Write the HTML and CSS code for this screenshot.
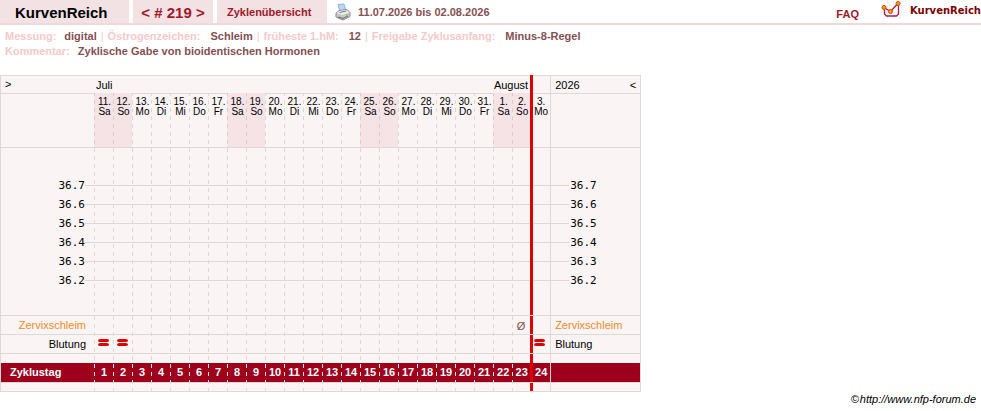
FILE: index.html
```html
<!DOCTYPE html>
<html lang="de">
<head>
<meta charset="utf-8">
<title>KurvenReich</title>
<link rel="stylesheet" href="styles.css">
</head>
<body>
<header class="topbar">
  <h1 class="tab brand">KurvenReich</h1>
  <nav class="tab pager"><a href="#prev">&lt;</a> <span># 219</span> <a href="#next">&gt;</a></nav>
  <a class="tab overview" href="#overview">Zyklenübersicht</a>
  <a class="print" href="#print" aria-label="Drucken">
    <svg width="16" height="18" viewBox="0 0 16 18" aria-hidden="true">
      <path d="M3 1.500 9 1l2 7-6 1z" fill="#b5d8f8" stroke="#8fb3dc"/>
      <path d="M1 10 4 7.500l8-1 3 3v4L8 17l-7-3z" fill="#c4c7c5" stroke="#8b908e"/>
      <path d="M1.500 10 4.500 8l7-1 3 2.500L7.500 12z" fill="#eceeec"/>
      <path d="M4.500 9.500l7-1.500" stroke="#777"/>
      <path d="M3 14l5 1.500 5-2.500" stroke="#666" fill="none"/>
      <path d="M11 12h2" stroke="#7dba62"/>
    </svg>
  </a>
  <span class="range">11.07.2026 bis 02.08.2026</span>
  <a class="faq" href="#faq">FAQ</a>
  <a class="logo" href="#home">
    <svg width="26" height="20" viewBox="0 0 26 20" aria-hidden="true">
      <path d="M0 12.500h26M0 5.500h26M6.500 1v18M12.500 1v18M19.500 1v18" stroke="#eee" stroke-dasharray="3 1"/>
      <path d="M3.500 8v6l2 2h10l2-2V5" fill="none" stroke="#b5184f" stroke-width="1.300"/>
      <path d="M3 7.500l6.500 4L17 3.500" fill="none" stroke="#b5184f" stroke-width="1.300"/>
      <g fill="#ff9a00" stroke="#c8500a"><circle cx="3" cy="7.500" r="2"/><circle cx="9.500" cy="11.500" r="2"/><circle cx="17" cy="3.500" r="2"/></g>
    </svg>
    <span>KurvenReich</span>
  </a>
</header>

<section class="info">
  <p><span>Messung:</span><b>digital</b><i>|</i><span>Östrogenzeichen:</span><b class="wide">Schleim</b><i>|</i><span>früheste 1.hM:</span><b class="wide">12</b><i>|</i><span>Freigabe Zyklusanfang:</span><b class="wide">Minus-8-Regel</b></p>
  <p><span>Kommentar:</span><b>Zyklische Gabe von bioidentischen Hormonen</b></p>
</section>

<table class="chart">
  <colgroup><col class="c-label"><col class="c-day" span="22"><col class="c-last"><col class="c-next"><col class="c-side"></colgroup>
  <tbody>
  <tr class="months">
    <td class="side nav"><a href="#earlier">&gt;</a></td>
    <th class="side july" colspan="21">Juli</th>
    <th class="side august" colspan="2">August</th>
    <td class="side next"></td>
    <td class="side right"><div class="year"><span>2026</span><a href="#later">&lt;</a></div></td>
  </tr>
  <tr class="dates">
    <td class="side"></td>
    <th class="we">11.<br>Sa</th><th class="we">12.<br>So</th><th>13.<br>Mo</th><th>14.<br>Di</th><th>15.<br>Mi</th><th>16.<br>Do</th><th>17.<br>Fr</th>
    <th class="we">18.<br>Sa</th><th class="we">19.<br>So</th><th>20.<br>Mo</th><th>21.<br>Di</th><th>22.<br>Mi</th><th>23.<br>Do</th><th>24.<br>Fr</th>
    <th class="we">25.<br>Sa</th><th class="we">26.<br>So</th><th>27.<br>Mo</th><th>28.<br>Di</th><th>29.<br>Mi</th><th>30.<br>Do</th><th>31.<br>Fr</th>
    <th class="we">1.<br>Sa</th><th class="we">2.<br>So</th><th class="next">3.<br>Mo</th>
    <td class="side right"></td>
  </tr>
  <tr class="above"><td class="side"></td><td colspan="23"></td><td class="next"></td><td class="side right"></td></tr>
  <tr class="temp"><th class="side">36.7</th><td colspan="23"></td><td class="next"></td><td class="side right">36.7</td></tr>
  <tr class="temp"><th class="side">36.6</th><td colspan="23"></td><td class="next"></td><td class="side right">36.6</td></tr>
  <tr class="temp"><th class="side">36.5</th><td colspan="23"></td><td class="next"></td><td class="side right">36.5</td></tr>
  <tr class="temp"><th class="side">36.4</th><td colspan="23"></td><td class="next"></td><td class="side right">36.4</td></tr>
  <tr class="temp"><th class="side">36.3</th><td colspan="23"></td><td class="next"></td><td class="side right">36.3</td></tr>
  <tr class="temp"><th class="side">36.2</th><td colspan="23"></td><td class="next"></td><td class="side right">36.2</td></tr>
  <tr class="below"><td class="side"></td><td colspan="23"></td><td class="next"></td><td class="side right"></td></tr>
  <tr class="row mucus"><th class="side">Zervixschleim</th><td colspan="22"></td><td class="mark">Ø</td><td class="next"></td><td class="side right">Zervixschleim</td></tr>
  <tr class="row bleed">
    <th class="side">Blutung</th>
    <td><span class="flow"></span></td><td><span class="flow"></span></td><td colspan="21"></td>
    <td class="next"><span class="flow"></span></td>
    <td class="side right">Blutung</td>
  </tr>
  <tr class="row gap"><td class="side"></td><td colspan="23"></td><td class="next"></td><td class="side right"></td></tr>
  <tr class="cycle">
    <th>Zyklustag</th>
    <td>1</td><td>2</td><td>3</td><td>4</td><td>5</td><td>6</td><td>7</td><td>8</td><td>9</td><td>10</td><td>11</td><td>12</td>
    <td>13</td><td>14</td><td>15</td><td>16</td><td>17</td><td>18</td><td>19</td><td>20</td><td>21</td><td>22</td><td>23</td>
    <td class="next">24</td><td class="right"></td>
  </tr>
  <tr class="row end"><td class="side"></td><td colspan="23"></td><td class="next"></td><td class="side right"></td></tr>
  </tbody>
</table>
<footer><a href="#forum">©&#8202;http://www.nfp-forum.de</a></footer>
</body>
</html>
```
FILE: styles.css
```css
:root {
  --paper: #faf4f4;
  --blush: #f3e2e4;
  --line: #dcdad9;
  --red: #e00000;
  --wine: #9e001c;
  --brown: #855052;
}

* { box-sizing: border-box; }

body {
  margin: 0;
  background: #fff;
  color: #000;
  font: 11px/15px "Liberation Sans", Arial, sans-serif;
}

a { color: inherit; text-decoration: none; }

/* top bar */
.topbar {
  display: flex;
  height: 25px;
  border-bottom: 2px solid #f1d9db;
  font-weight: bold;
  line-height: 25px;
  white-space: nowrap;
}

.tab {
  margin: 0 4px 0 0;
  background: var(--blush);
  color: #a0182a;
}

.brand {
  padding: 0 20px 0 15px;
  width: 129px;
  color: #000;
  font-size: 15px;
}

.pager { width: 80px; font-size: 15px; text-align: center; }
.overview { width: 110px; padding-left: 10px; margin-right: 8px; }
.print { display: flex; padding-top: 3px; }
.range { margin-left: 7px; color: var(--brown); }
.faq { margin: 2px 22px 0 auto; color: #a0182a; }
.logo { display: flex; color: #800000; font: bold 10px/22px "DejaVu Sans", sans-serif; }
.logo span { margin-left: 3px; }

/* cycle details */
.info {
  padding: 4px 5px 16px;
  color: #f7c9c9;
  font-weight: bold;
}

.info p { margin: 0; }
.info b { margin-left: 8px; color: var(--brown); }
.info b.wide { margin-left: 10px; }
.info i { margin: 0 4px; font-style: normal; font-weight: normal; }

/* curve sheet */
.chart {
  --rule: linear-gradient(var(--line), var(--line)) 0 0 / 100% 1px no-repeat;
  --bar: linear-gradient(var(--red), var(--red)) 0 0 / 3px 100% no-repeat;
  table-layout: fixed;
  width: 641px;
  border-spacing: 0;
  background:
    conic-gradient(at 1px 4px, transparent 270deg, var(--line) 0) 94px 1px / 19px 8px,
    var(--paper);
}

.chart th, .chart td { padding: 0; font-weight: normal; }
.c-label { width: 94px; }
.c-day { width: 19px; }
.c-last { width: 18px; }
.c-next { width: 20px; }
.c-side { width: 91px; }

.side { background: var(--paper); }
.chart tr > :first-child { border-left: 1px solid var(--line); }
.chart .right {
  padding-left: 4px;
  border-left: 1px solid var(--line);
  border-right: 1px solid var(--line);
  text-align: left;
}
.next { background: var(--bar), var(--paper); }

.months { height: 18px; }
.months > * { background: var(--rule), var(--paper); }
.months .nav { padding-left: 4px; }
.months .july { padding: 2px 0 0 2px; text-align: left; }
.months .august { padding: 2px 2px 0 0; text-align: right; white-space: nowrap; }
.months .right { padding-top: 2px; }
.year { display: flex; justify-content: space-between; padding-right: 4px; }

.dates { height: 54px; }
.dates > *, .above > * { background: var(--rule); }
.dates .side, .above .side { background: var(--rule), var(--paper); }
.months .next, .dates .next, .above .next { background: var(--bar), var(--rule), var(--paper); }
.chart .dates th {
  padding: 4px 0 0 2px;
  font: 10px/10px "Liberation Sans Narrow", "Liberation Sans", sans-serif;
  text-align: center;
  vertical-align: top;
}
.dates .we { background: rgba(215, 110, 130, 0.12); }

.above { height: 29px; }
.below { height: 25px; }

.temp { height: 19px; font: 11px/19px "DejaVu Sans Mono", monospace; }
.temp > * { background: linear-gradient(var(--line), var(--line)) 0 9px / 100% 1px no-repeat; }
.temp .side { background: linear-gradient(var(--line), var(--line)) 100% 9px / 9px 1px no-repeat, var(--paper); }
.chart .temp th { padding-right: 9px; text-align: right; }
.chart .temp .right { padding-left: 19px; background-position: 0 9px, 0 0; background-size: 18px 1px, auto; }
.temp .next { background: var(--bar), linear-gradient(var(--line), var(--line)) 0 9px / 100% 1px no-repeat, var(--paper); }

.row { height: 19px; }
.row > * { border-top: 1px solid var(--line); text-align: center; }
.chart .row th { padding-right: 8px; text-align: right; }
.mucus .side { color: #f58a1f; }
.chart .mucus .mark { padding-top: 2px; color: var(--brown); }
.gap { height: 10px; }
.end { height: 10px; }
.end > * { border-bottom: 1px solid var(--line); }

.flow {
  display: grid;
  gap: 1px;
  width: 11px;
  margin: 0 0 3px 4px;
}
.flow::before, .flow::after {
  content: "";
  height: 3px;
  border-radius: 3px / 2px;
  background: var(--red);
}

.cycle { height: 19px; color: #fff; }
.chart .cycle > * { background: var(--wine); font-weight: bold; text-align: center; }
.chart .cycle td { padding-left: 1px; background: conic-gradient(at 1px 4px, transparent 270deg, #f3e2e4 0) 0 1px / 19px 8px, var(--wine); }
.chart .cycle th { padding-left: 9px; text-align: left; }
.chart .cycle .next { background: var(--bar), var(--wine); padding-left: 2px; }
.chart .cycle .right { background: var(--wine); }

footer { padding: 0 5px; text-align: right; font-style: italic; }
```
